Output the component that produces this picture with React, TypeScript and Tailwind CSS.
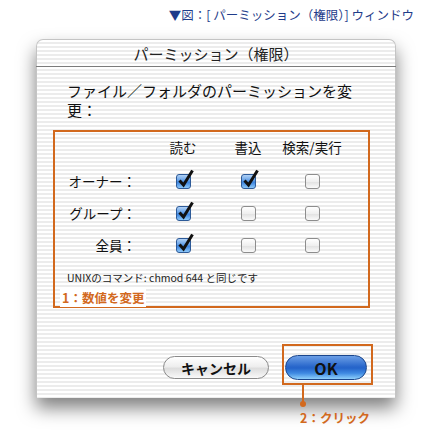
import React from 'react';

const STRIPES =
  'bg-[repeating-linear-gradient(180deg,#ffffff_0px,#ffffff_2px,#ececec_2px,#ececec_4px)]';

const ROWS: { label: string; values: boolean[] }[] = [
  { label: 'オーナー：', values: [true, true, false] },
  { label: 'グループ：', values: [true, false, false] },
  { label: '全員：', values: [true, false, false] },
];

function CheckBox({ checked }: { checked: boolean }) {
  return (
    <span className="relative inline-block w-[15px] h-[15px]">
      {checked ? (
        <span className="block w-full h-full rounded-[3px] border border-[#2d5a98] bg-[linear-gradient(180deg,#b3d3f6_0%,#5c9be6_45%,#3a82de_55%,#8cc8f9_100%)]" />
      ) : (
        <span className="block w-full h-full rounded-[3px] border border-[#8d8d8d] bg-[linear-gradient(180deg,#ffffff_0%,#efefef_50%,#e2e2e2_55%,#fafafa_100%)]" />
      )}
      {checked && (
        <svg className="absolute left-[1px] top-[-5px]" width="17" height="19" viewBox="0 0 17 19">
          <path d="M2.5 11.5 L6.5 16 L15.5 1.5" stroke="#111" strokeWidth="3" fill="none" strokeLinejoin="miter" />
        </svg>
      )}
    </span>
  );
}

export default function App() {
  return (
    <div className="w-[430px] h-[433px] bg-white overflow-hidden font-['Noto_Sans_CJK_JP','Noto_Sans',sans-serif]">
      <p className="text-right pr-[16px] pt-[7px] leading-[16px] text-[12.5px] text-[#1f3c8a]">
        ▼図：[ パーミッション（権限）] ウィンドウ
      </p>

      <div className="ml-[36px] mt-[16px] w-[360px] h-[359px] flex flex-col rounded-t-[7px] shadow-[0_10px_18px_rgba(0,0,0,0.5)]">
        {/* title bar */}
        <div className={`h-[27px] shrink-0 flex items-center justify-center rounded-t-[7px] border border-b-0 border-[#c4c4c4] ${STRIPES}`}>
          <span className="text-[15px] leading-none text-[#222] pt-[1px]">パーミッション（権限）</span>
        </div>
        <div className="h-[1px] bg-[#7c7c7c] shrink-0" />

        {/* body */}
        <div className={`flex-1 flex flex-col border-x border-[#c4c4c4] ${STRIPES}`}>
          <div className="pl-[30px] pt-[14px] text-[15px] leading-[19px] text-[#111]">
            <p>ファイル／フォルダのパーミッションを変</p>
            <p>更：</p>
          </div>

          <div className="ml-[16px] mt-[11px] w-[317px] border-2 border-[#d2691e] flex flex-col">
            <div className="grid grid-cols-[95px_66px_64px_64px] h-[33px] pb-[3px] items-center text-[13.5px] text-[#111]">
              <span />
              <span className="text-center">読む</span>
              <span className="text-center">書込</span>
              <span className="text-center">検索/実行</span>
            </div>
            {ROWS.map((row) => (
              <div
                key={row.label}
                className="grid grid-cols-[95px_66px_64px_64px] h-[32px] items-center text-[13.5px] text-[#111]"
              >
                <span className="text-right pr-[14px]">{row.label}</span>
                {row.values.map((v, i) => (
                  <span key={i} className="flex justify-center">
                    <CheckBox checked={v} />
                  </span>
                ))}
              </div>
            ))}
            <p className="mt-[9px] pl-[12px] h-[16px] leading-[16px] text-[10.5px] text-[#222]">
              UNIXのコマンド: chmod 644 と同じです
            </p>
            <p className="mt-[2px] mb-[2px] pl-[5px] h-[16px] leading-[16px]">
              <span className="bg-white px-[2px] text-[12.5px] font-bold text-[#d2691e]">1：数値を変更</span>
            </p>
          </div>

          <div className="mt-[47px] pr-[28px] flex justify-end items-center gap-[16px]">
            <button className="w-[106px] h-[23px] rounded-full border border-[#8a8a8a] bg-[linear-gradient(180deg,#ffffff_0%,#eeeeee_45%,#dddddd_55%,#f9f9f9_100%)] text-[14px] font-bold leading-none text-[#111]">
              キャンセル
            </button>
            <div className="relative">
              <button className="w-[82px] h-[25px] rounded-full border border-[#1b468c] bg-[linear-gradient(180deg,#6c9fe6_0%,#2a68cc_45%,#2463c9_52%,#3f8ae2_75%,#8fd0fb_100%)] text-[16px] font-bold leading-none text-[#111]">
                OK
              </button>
              <span className="absolute left-[-3px] top-[-11px] w-[91px] h-[41px] border-2 border-[#d2691e]" />
              <span className="absolute left-[17px] top-[30px] w-[2px] h-[19px] bg-[#d2691e]" />
              <span className="absolute left-[15px] top-[46px] w-[6px] h-[6px] rounded-full bg-[#d2691e]" />
              <span className="absolute left-[15px] top-[55px] whitespace-nowrap text-[12.5px] font-bold leading-[16px] text-[#d2691e]">
                2：クリック
              </span>
            </div>
          </div>
        </div>
      </div>
    </div>
  );
}
